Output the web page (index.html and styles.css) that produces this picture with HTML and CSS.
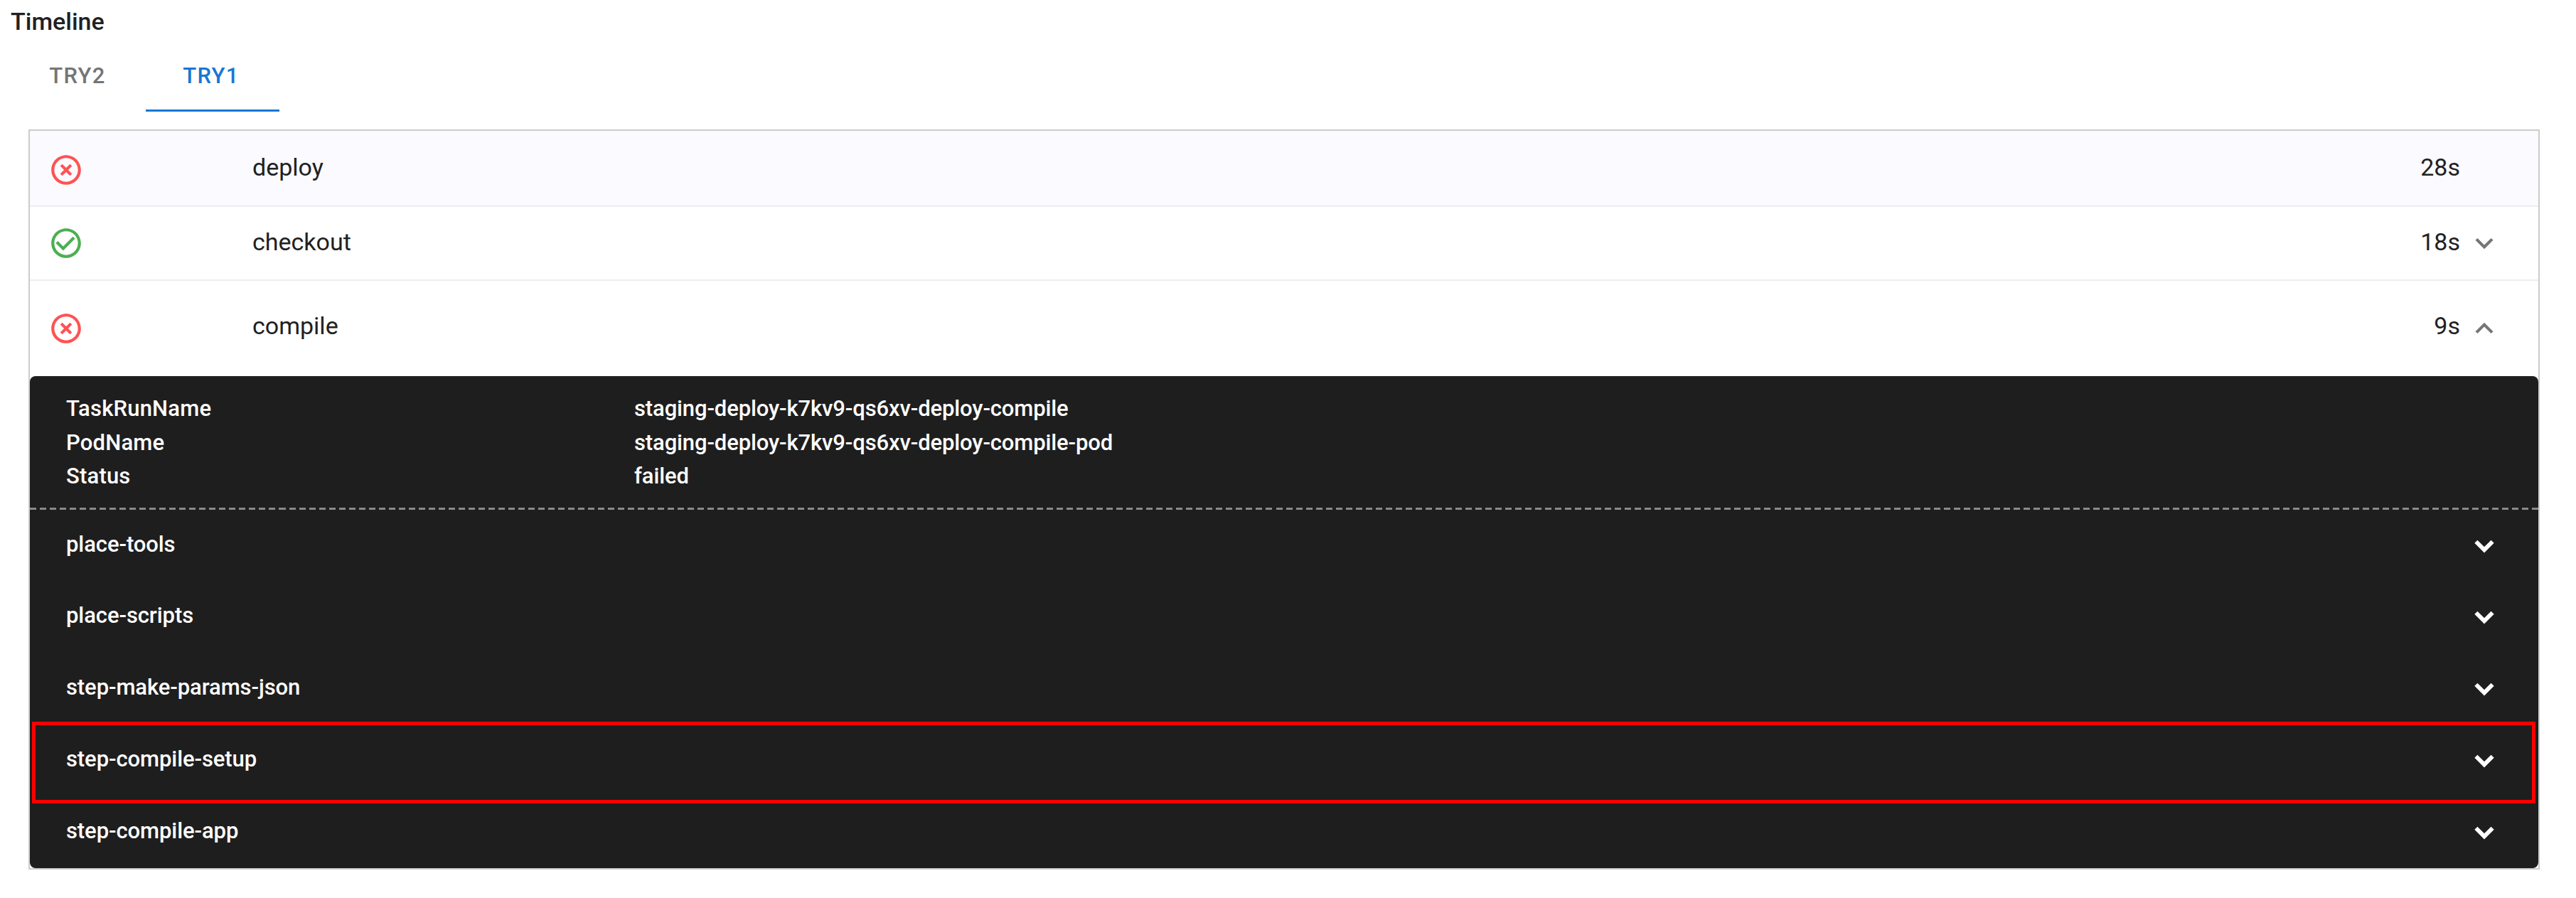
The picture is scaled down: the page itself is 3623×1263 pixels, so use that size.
FILE: index.html
```html
<!DOCTYPE html>
<html lang="en">
<head>
    <meta charset="UTF-8">
    <title>Timeline</title>
    <link rel="stylesheet" href="styles.css">
</head>
<body>
    <svg class="defs">
        <symbol id="failed" viewBox="0 0 24 24"><path d="M14.59 8L12 10.59 9.41 8 8 9.41 10.59 12 8 14.59 9.41 16 12 13.41 14.59 16 16 14.59 13.41 12 16 9.41 14.59 8zM12 2C6.47 2 2 6.47 2 12s4.47 10 10 10 10-4.47 10-10S17.53 2 12 2zm0 18c-4.41 0-8-3.59-8-8s3.59-8 8-8 8 3.59 8 8-3.59 8-8 8z"/></symbol>
        <symbol id="success" viewBox="0 0 24 24"><path d="M16.59 7.58L10 14.17l-3.59-3.58L5 12l5 5 8-8zM12 2C6.48 2 2 6.48 2 12s4.48 10 10 10 10-4.48 10-10S17.52 2 12 2zm0 18c-4.42 0-8-3.58-8-8s3.58-8 8-8 8 3.58 8 8-3.58 8-8 8z"/></symbol>
        <symbol id="more" viewBox="0 0 24 24"><path d="M16.59 8.59L12 13.17 7.41 8.59 6 10l6 6 6-6z"/></symbol>
        <symbol id="less" viewBox="0 0 24 24"><path d="M12 8l-6 6 1.41 1.41L12 10.83l4.59 4.58L18 14z"/></symbol>
    </svg>

    <h1>Timeline</h1>

    <div class="tabs">
        <button class="tab-btn">TRY2</button>
        <button class="tab-btn active">TRY1</button>
    </div>

    <div class="timeline">
        <div class="task head">
            <svg class="icon failed"><use href="#failed"/></svg>
            <span class="name">deploy</span>
            <span class="time">28s</span>
            <span class="arrow"></span>
        </div>
        <div class="task">
            <svg class="icon success"><use href="#success"/></svg>
            <span class="name">checkout</span>
            <span class="time">18s</span>
            <svg class="arrow"><use href="#more"/></svg>
        </div>
        <div class="task open">
            <svg class="icon failed"><use href="#failed"/></svg>
            <span class="name">compile</span>
            <span class="time">9s</span>
            <svg class="arrow"><use href="#less"/></svg>
        </div>

        <div class="detail">
            <dl class="info">
                <dt>TaskRunName</dt>
                <dd>staging-deploy-k7kv9-qs6xv-deploy-compile</dd>
                <dt>PodName</dt>
                <dd>staging-deploy-k7kv9-qs6xv-deploy-compile-pod</dd>
                <dt>Status</dt>
                <dd>failed</dd>
            </dl>
            <div class="dashes"></div>
            <div class="steps">
                <div class="step"><span class="label">place-tools</span><svg class="arrow"><use href="#more"/></svg></div>
                <div class="step"><span class="label">place-scripts</span><svg class="arrow"><use href="#more"/></svg></div>
                <div class="step"><span class="label">step-make-params-json</span><svg class="arrow"><use href="#more"/></svg></div>
                <div class="step marked"><span class="label">step-compile-setup</span><svg class="arrow"><use href="#more"/></svg></div>
                <div class="step"><span class="label">step-compile-app</span><svg class="arrow"><use href="#more"/></svg></div>
            </div>
        </div>
    </div>
</body>
</html>
```

FILE: styles.css
```css
*, *::after {
    box-sizing: border-box;
}
body {
    font-family: Roboto, sans-serif;
    margin: 0;
    background-color: #fff;
    color: #212121;
}
.defs {
    display: none;
}
h1 {
    margin: 0;
    padding: 10px 0 0 15px;
    height: 60px;
    font-size: 34px;
    line-height: 41px;
    font-weight: 500;
}
.tabs {
    display: flex;
    padding-left: 17px;
    height: 97px;
}
.tab-btn {
    width: 188px;
    padding: 0 4px 1px 0;
    border: none;
    border-bottom: 3px solid transparent;
    background: none;
    color: #757575;
    font-family: inherit;
    font-size: 31px;
    font-weight: 500;
    letter-spacing: 1.3px;
}
.tab-btn.active {
    color: #1976d2;
    border-bottom-color: #1976d2;
}
.timeline {
    width: 3532px;
    margin: 25px 0 0 40px;
    border: 2px solid #ccc;
}
.task {
    display: flex;
    align-items: center;
    height: 104px;
    padding: 0 51px 0 26px;
    border-bottom: 2px solid #eee;
    font-size: 34px;
    line-height: 40px;
}
.task.head {
    height: 107px;
    background-color: #fafaff;
}
.task.open {
    height: 134px;
    border-bottom: none;
}
.icon {
    width: 50px;
    height: 50px;
    margin-right: 237px;
}
.head .icon {
    margin-top: 4px;
}
.failed {
    fill: #ff5252;
}
.success {
    fill: #4caf50;
}
.name {
    flex: 1;
}
.name, .time {
    padding-bottom: 4px;
}
.open .name, .open .time {
    padding-bottom: 8px;
}
.arrow {
    width: 50px;
    height: 50px;
    margin-left: 9px;
    fill: #757575;
}
.detail {
    background-color: #1e1e1e;
    border-radius: 8px;
    color: #fff;
    font-size: 31px;
    font-weight: 500;
}
.info {
    display: grid;
    grid-template-columns: 799px 1fr;
    margin: 0;
    padding: 22px 51px 20px;
    line-height: 47.7px;
}
.info dt {
    letter-spacing: 0.2px;
}
.info dd {
    margin: 0;
    letter-spacing: -0.12px;
}
.dashes {
    height: 3px;
    background: repeating-linear-gradient(to right, #8a8a8a 0 9px, transparent 9px 14.02px);
}
.step {
    position: relative;
    display: flex;
    align-items: center;
    justify-content: space-between;
    height: 100.8px;
    padding: 0 51px;
}
.label {
    padding-bottom: 5px;
    letter-spacing: -0.08px;
}
.step .arrow {
    fill: #fff;
    stroke: #fff;
    stroke-width: 0.8px;
}
/* highlighted step */
.marked::after {
    content: "";
    position: absolute;
    top: -5px;
    left: 3px;
    right: 4px;
    height: 115px;
    border: 5px solid #f00;
}
```
